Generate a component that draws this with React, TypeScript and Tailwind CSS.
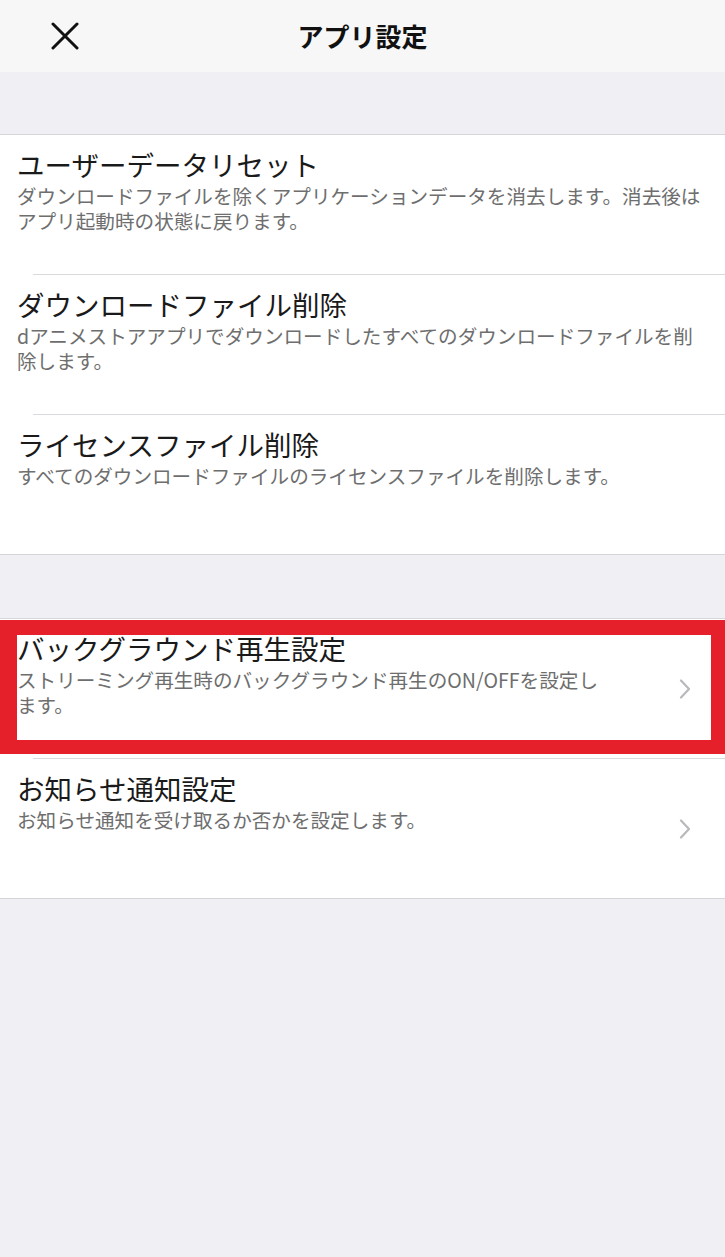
import React from "react";

function Chevron() {
  return (
    <svg width="12" height="20" viewBox="0 0 12 20" fill="none">
      <path d="M2 1.5 L10 10 L2 18.5" stroke="#b8b8bd" strokeWidth="2.2" strokeLinecap="round" strokeLinejoin="round" />
    </svg>
  );
}

function Row({ title, desc, chevron }: { title: string; desc: string; chevron?: boolean }) {
  return (
    <div className="flex h-[139px] justify-between pl-[17px]">
      <div className={chevron ? "w-[590px] pt-[10px]" : "flex-1 pr-[15px] pt-[10px]"}>
        <div className="text-[27.5px] leading-[38px] text-[#1a1a1a]">{title}</div>
        <div className="text-[19.6px] leading-[25px] text-[#6e6e6e] break-all">{desc}</div>
      </div>
      {chevron && (
        <div className="mr-[34px] flex items-center">
          <Chevron />
        </div>
      )}
    </div>
  );
}

function Sep() {
  return <div className="ml-[33px] h-px bg-[#dadade]" />;
}

export default function App() {
  return (
    <div className="min-h-[1257px] w-[725px] bg-[#efeff4] font-['Noto_Sans_CJK_JP',sans-serif]">
      <header className="grid h-[72px] grid-cols-[130px_1fr_130px] items-center bg-[#f7f7f7]">
        <div className="flex items-center justify-center">
          <svg width="28" height="28" viewBox="0 0 28 28" fill="none">
            <path d="M2 2 L26 26 M26 2 L2 26" stroke="#111" strokeWidth="3" strokeLinecap="round" />
          </svg>
        </div>
        <div className="text-center text-[26px] font-bold leading-none text-[#111]">アプリ設定</div>
        <div />
      </header>
      <div className="h-[62px]" />
      <section className="border-y border-[#d6d6da] bg-white">
        <Row
          title="ユーザーデータリセット"
          desc="ダウンロードファイルを除くアプリケーションデータを消去します。消去後はアプリ起動時の状態に戻ります。"
        />
        <Sep />
        <Row
          title="ダウンロードファイル削除"
          desc="dアニメストアアプリでダウンロードしたすべてのダウンロードファイルを削除します。"
        />
        <Sep />
        <Row title="ライセンスファイル削除" desc="すべてのダウンロードファイルのライセンスファイルを削除します。" />
      </section>
      <div className="h-[63px]" />
      <section className="relative border-y border-[#d6d6da] bg-white">
        <Row
          title="バックグラウンド再生設定"
          desc="ストリーミング再生時のバックグラウンド再生のON/OFFを設定します。"
          chevron
        />
        <Sep />
        <Row title="お知らせ通知設定" desc="お知らせ通知を受け取るか否かを設定します。" chevron />
        <div className="pointer-events-none absolute left-0 right-0 top-[1px] h-[134px] border-b-[14px] border-l-[17px] border-r-[14px] border-t-[15px] border-[#e5202b]" />
      </section>
    </div>
  );
}
